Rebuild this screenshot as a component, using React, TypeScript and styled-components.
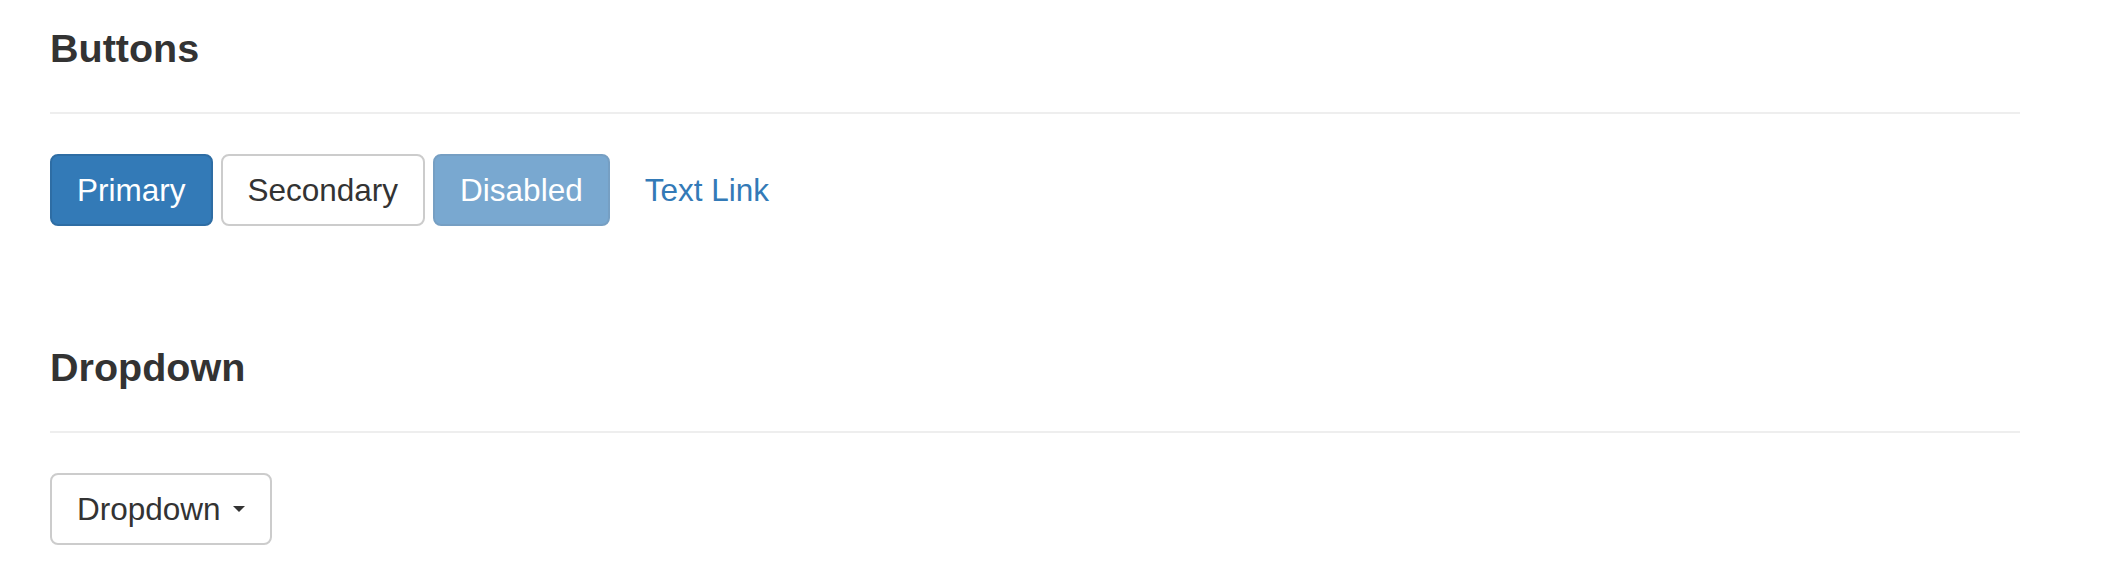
import styled, { createGlobalStyle, css } from 'styled-components'

const GlobalStyle = createGlobalStyle`
  body {
    margin: 0;
    background: #fff;
    color: #333;
    font-family: "Liberation Sans", Arial, Helvetica, sans-serif;
  }
`;

const Page = styled.div`
  width: 1970px;
  padding: 27px 0 0 50px;
`;

const Section = styled.section`
  margin-bottom: 120px;

  &:last-child {
    margin-bottom: 0;
  }
`;

const SectionHeader = styled.h4`
  margin: 0 0 40px 0;
  padding-bottom: 42px;
  border-bottom: 2px solid #eee;
  font-size: 39.5px;
  line-height: 43px;
  font-weight: bold;
  color: #333;
`;

const Row = styled.div`
  display: flex;
  align-items: center;
  gap: 8px;
`;

type Variant = 'primary' | 'secondary' | 'link';

const Button = styled.button<{ $variant: Variant }>`
  display: inline-flex;
  align-items: center;
  font-family: "Liberation Sans", Arial, Helvetica, sans-serif;
  font-size: 31.5px;
  line-height: 44px;
  padding: 12px 25px;
  border: 2px solid transparent;
  border-radius: 8px;
  cursor: pointer;
  white-space: nowrap;

  ${({ $variant }) => $variant === 'primary' && css`
    background: #337ab7;
    border-color: #2e6da4;
    color: #fff;
  `}
  ${({ $variant }) => $variant === 'secondary' && css`
    background: #fff;
    border-color: #ccc;
    color: #333;
  `}
  ${({ $variant }) => $variant === 'link' && css`
    background: transparent;
    color: #337ab7;
  `}

  &:disabled {
    opacity: 0.65;
    cursor: not-allowed;
  }
`;

const Caret = styled.span`
  display: inline-block;
  width: 0;
  height: 0;
  margin-left: 12px;
  border-top: 6px solid #333;
  border-left: 6px solid transparent;
  border-right: 6px solid transparent;
`;

const App = () => {
  return (
    <Page>
      <GlobalStyle />
      <Section>
        <SectionHeader>Buttons</SectionHeader>
        <Row>
          <Button $variant='primary'>Primary</Button>
          <Button $variant='secondary'>Secondary</Button>
          <Button $variant='primary' disabled>Disabled</Button>
          <Button $variant='link'>Text Link</Button>
        </Row>
      </Section>
      <Section>
        <SectionHeader>Dropdown</SectionHeader>
        <Row>
          <Button $variant='secondary'>
            Dropdown
            <Caret />
          </Button>
        </Row>
      </Section>
    </Page>
  )
}

export default App
